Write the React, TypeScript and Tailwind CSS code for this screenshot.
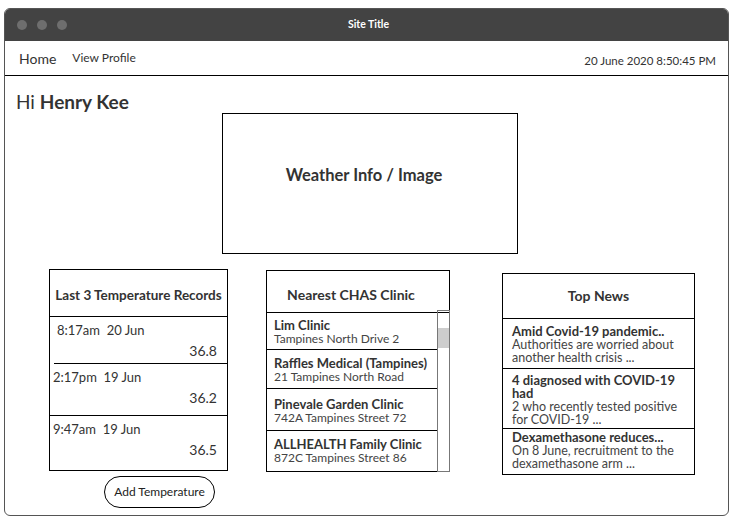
const font = { fontFamily: '"Source Sans Pro", Lato, "Open Sans", sans-serif' };

const temps = [
    { time: '8:17am', day: '20 Jun', value: '36.8', pad: 'pl-[3px]', h: 'h-[47px]', inset: 'ml-[4px]' },
    { time: '2:17pm', day: '19 Jun', value: '36.2', pad: 'pl-[3px]', h: 'h-[52px]', inset: '' },
    { time: '9:47am', day: '19 Jun', value: '36.5', pad: 'pl-[3px]', h: 'h-[54px]', inset: '' },
];

const clinics = [
    { name: 'Lim Clinic', addr: 'Tampines North Drive 2', h: 'h-[37px]', pt: 'pt-[5px]' },
    { name: 'Raffles Medical (Tampines)', addr: '21 Tampines North Road', h: 'h-[39px]', pt: 'pt-[6px]' },
    { name: 'Pinevale Garden Clinic', addr: '742A Tampines Street 72', h: 'h-[42px]', pt: 'pt-[8px]' },
    { name: 'ALLHEALTH Family Clinic', addr: '872C Tampines Street 86', h: 'h-[40px]', pt: 'pt-[6px]' },
];

const news = [
    { title: 'Amid Covid-19 pandemic..', body: ['Authorities are worried about', 'another health crisis ...'], h: 'h-[50px]', pt: 'pt-[6px]' },
    { title: '4 diagnosed with COVID-19 had', body: ['2 who recently tested positive', 'for COVID-19 ...'], h: 'h-[60px]', pt: 'pt-[5px]' },
    { title: 'Dexamethasone reduces...', body: ['On 8 June, recruitment to the', 'dexamethasone arm ...'], h: 'h-[45px]', pt: 'pt-[2px]' },
];

export default function App() {
    return (
        <div className="w-[735px] h-[522px] bg-white pt-[8px] pl-[4px]" style={font}>
            <div className="w-[725px] h-[508px] rounded-[6px] border border-[#555] overflow-hidden flex flex-col">
                <div className="h-[33px] bg-[#434343] flex items-center relative -mt-px -mx-px">
                    <div className="flex gap-[10px] pl-[13px]">
                        <span className="w-[10px] h-[10px] rounded-full bg-[#6e6e6e]" />
                        <span className="w-[10px] h-[10px] rounded-full bg-[#6e6e6e]" />
                        <span className="w-[10px] h-[10px] rounded-full bg-[#6e6e6e]" />
                    </div>
                    <div className="absolute inset-0 flex items-center justify-center pl-[4px] text-white text-[10.5px] font-bold">
                        Site Title
                    </div>
                </div>

                <div className="h-[35px] border-b border-black flex items-center px-[14px] text-[#333]">
                    <span className="text-[14px]">Home</span>
                    <span className="text-[12px] ml-[16px]">View Profile</span>
                    <span className="text-[11.5px] ml-auto mt-[6px] mr-[-2px]">20 June 2020 8:50:45 PM</span>
                </div>

                <div className="flex-1 flex flex-col text-[#333]">
                    <div className="text-[19px] leading-[22px] pl-[11px] pt-[15px]">
                        Hi <span className="font-bold">Henry Kee</span>
                    </div>

                    <div className="ml-[217px] w-[296px] h-[141px] border border-black flex items-center justify-center pb-[16px] pr-[12px]">
                        <span className="text-[16.5px] font-bold">Weather Info / Image</span>
                    </div>

                    <div className="flex items-start mt-[15px]">
                        <div className="ml-[44px] flex flex-col">
                            <div className="w-[179px] border border-black">
                                <div className="h-[47px] border-b border-black flex items-center justify-center pt-[5px] text-[13.5px] font-bold">
                                    Last 3 Temperature Records
                                </div>
                                {temps.map((t, i) => (
                                    <div key={t.time} className={`${t.h} ${i < 2 ? 'border-b border-black' : ''} ${t.inset} flex flex-col pr-[10px] ${t.pad} pt-[5px]`}>
                                        <div className="text-[13px] leading-[16px]">
                                            {t.time}&nbsp;&nbsp;{t.day}
                                        </div>
                                        <div className="text-[14px] leading-[17px] text-right mt-[4px]">{t.value}</div>
                                    </div>
                                ))}
                            </div>
                            <button className="mt-[5px] ml-[55px] w-[111px] h-[32px] rounded-full border border-black text-[12px] text-[#222]">
                                Add Temperature
                            </button>
                        </div>

                        <div className="ml-[38px] mt-[1px] w-[184px] h-[202px] border border-black flex flex-col">
                            <div className="h-[44px] border-b border-black flex items-center justify-center pt-[6px] pr-[14px] text-[14px] font-bold">
                                Nearest CHAS Clinic
                            </div>
                            <div className="flex flex-1">
                                <div className="flex-1">
                                    {clinics.map((c, i) => (
                                        <div key={c.name} className={`${c.h} ${i < 3 ? 'border-b border-black' : ''} ${c.pt} pl-[7px] leading-[14px]`}>
                                            <div className="font-bold text-[13px]">{c.name}</div>
                                            <div className="text-[12px] text-[#444]">{c.addr}</div>
                                        </div>
                                    ))}
                                </div>
                                <div className="w-[13px] border border-[#777] -mt-[3px] -mb-px -mr-px flex flex-col">
                                    <div className="h-[17px]" />
                                    <div className="h-[20px] bg-[#cdcdcd]" />
                                </div>
                            </div>
                        </div>

                        <div className="ml-[52px] mt-[4px] w-[193px] border border-black">
                            <div className="h-[45px] border-b border-black flex items-center justify-center pb-[1px] text-[14px] font-bold">
                                Top News
                            </div>
                            {news.map((n, i) => (
                                <div key={n.title} className={`${n.h} ${i < 2 ? 'border-b border-black' : ''} pl-[9px] pr-[8px] ${n.pt} leading-[13px] overflow-hidden`}>
                                    <div className="font-bold text-[13px] max-w-[165px]">{n.title}</div>
                                    {n.body.map((b) => (
                                        <div key={b} className="text-[12.5px] text-[#444]">{b}</div>
                                    ))}
                                </div>
                            ))}
                        </div>
                    </div>
                </div>
            </div>
        </div>
    );
}
